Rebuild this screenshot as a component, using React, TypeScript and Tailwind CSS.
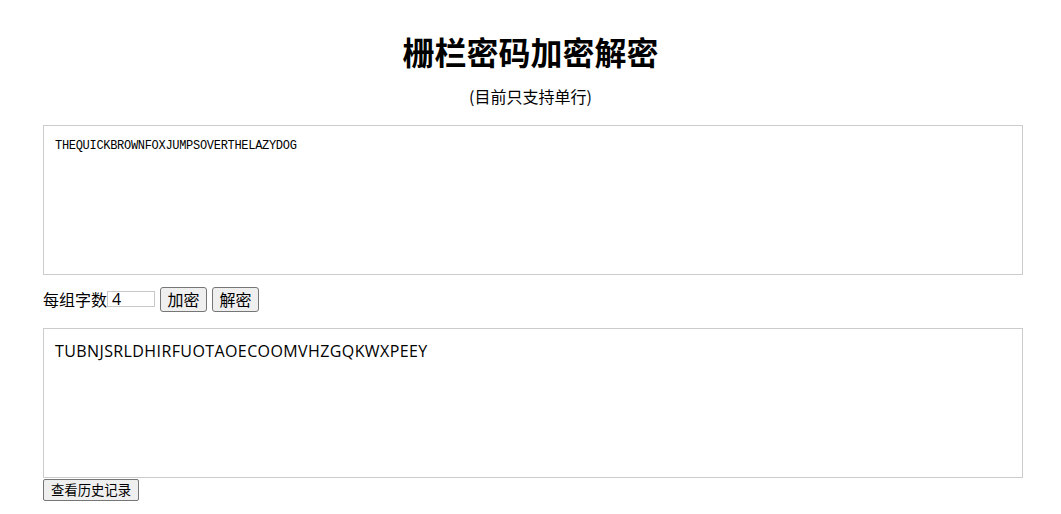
import React from "react";

export default function App() {
  return (
    <div className="w-[1061px] h-[514px] bg-white text-black px-[43px] flex flex-col font-['Noto_Sans','Noto_Sans_CJK_SC',sans-serif]">
      <h1 className="text-[32px] font-bold text-center leading-[40px] mt-[31px] font-['Noto_Sans_CJK_SC',sans-serif]">
        栅栏密码加密解密
      </h1>
      <p className="text-[16px] text-center leading-[20px] mt-[15px] font-['Noto_Sans_CJK_SC',sans-serif]">
        (目前只支持单行)
      </p>
      <div className="mt-[19px] w-[980px] h-[150px] border border-[#cccccc] px-[11px] pt-[13px]">
        <div className="text-[12px] leading-[14px] tracking-[-0.3px] font-['Liberation_Mono',monospace]">
          THEQUICKBROWNFOXJUMPSOVERTHELAZYDOG
        </div>
      </div>
      <div className="flex items-center mt-[11px] h-[26px]">
        <span className="text-[16px] leading-[20px] font-['Noto_Sans_CJK_SC',sans-serif]">每组字数</span>
        <input
          className="w-[48px] h-[16px] border border-[#c8c8c8] text-[16px] leading-[14px] px-[4px] outline-none font-['Open_Sans',sans-serif]"
          defaultValue="4"
        />
        <button className="ml-[5px] w-[47px] h-[25px] border border-[#767676] rounded-[3px] bg-[#efefef] text-[16px] leading-[20px] font-['Noto_Sans_CJK_SC',sans-serif]">
          加密
        </button>
        <button className="ml-[5px] w-[47px] h-[25px] border border-[#767676] rounded-[3px] bg-[#efefef] text-[16px] leading-[20px] font-['Noto_Sans_CJK_SC',sans-serif]">
          解密
        </button>
      </div>
      <div className="mt-[16px] w-[980px] h-[150px] border border-[#cccccc] px-[11px] pt-[11px]">
        <div className="text-[16px] leading-[22px] tracking-[0.4px] font-['Open_Sans',sans-serif]">
          TUBNJSRLDHIRFUOTAOECOOMVHZGQKWXPEEY
        </div>
      </div>
      <div className="mt-[1px] flex">
        <button className="w-[96px] h-[22px] border border-[#767676] rounded-[2px] bg-[#efefef] text-[13.33px] leading-[16px] font-['Noto_Sans_CJK_SC',sans-serif]">
          查看历史记录
        </button>
      </div>
    </div>
  );
}
